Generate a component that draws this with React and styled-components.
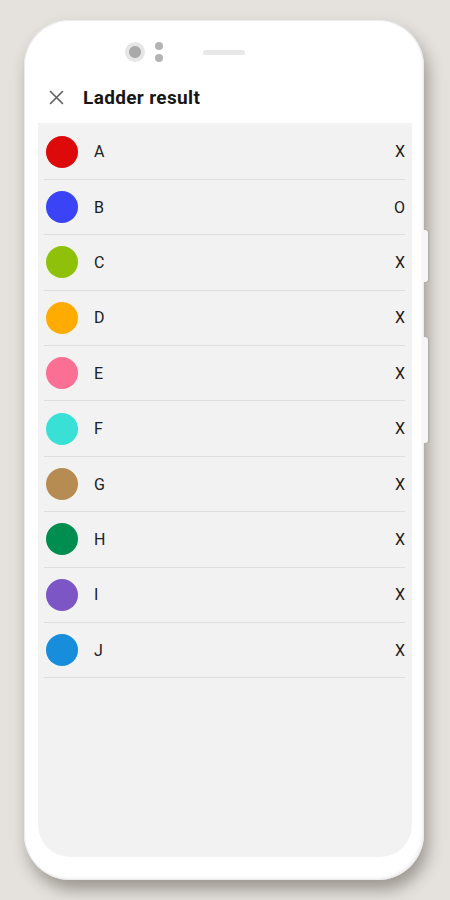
import React from "react";
import styled, { createGlobalStyle } from "styled-components";

const GlobalStyle = createGlobalStyle`
  html, body {
    margin: 0;
    padding: 0;
    background: #e5e2de;
    font-family: Roboto, "Liberation Sans", sans-serif;
  }
`;

const results = [
  { name: "A", color: "#dc0a0b", mark: "X" },
  { name: "B", color: "#3a43f5", mark: "O" },
  { name: "C", color: "#8fc10b", mark: "X" },
  { name: "D", color: "#ffab00", mark: "X" },
  { name: "E", color: "#fb6f95", mark: "X" },
  { name: "F", color: "#38e0d5", mark: "X" },
  { name: "G", color: "#b68c52", mark: "X" },
  { name: "H", color: "#008d50", mark: "X" },
  { name: "I", color: "#7b56c4", mark: "X" },
  { name: "J", color: "#188ddb", mark: "X" },
];

const App = () => {
  return (
    <>
      <GlobalStyle />
      <Stage>
        <Phone>
          <SideButton $top={210} $height={52} />
          <SideButton $top={317} $height={106} />
          <TopBar>
            <Camera />
            <Sensors>
              <Dot />
              <Dot />
            </Sensors>
            <Speaker />
          </TopBar>
          <Screen>
            <Header>
              <CloseButton>
                <svg width="15" height="15" viewBox="0 0 15 15">
                  <path
                    d="M1.5 1.5 L13.5 13.5 M13.5 1.5 L1.5 13.5"
                    stroke="#5f5f5f"
                    strokeWidth="1.6"
                    strokeLinecap="round"
                  />
                </svg>
              </CloseButton>
              <Title>Ladder result</Title>
            </Header>
            <List>
              {results.map((item) => (
                <Row key={item.name}>
                  <Swatch $color={item.color} />
                  <Name>{item.name}</Name>
                  <Mark>{item.mark}</Mark>
                </Row>
              ))}
            </List>
          </Screen>
        </Phone>
      </Stage>
    </>
  );
};

export default App;

const Stage = styled.div`
  width: 450px;
  height: 900px;
  padding: 20px 0 0 24px;
  box-sizing: border-box;
  overflow: hidden;
`;

const Phone = styled.div`
  position: relative;
  width: 400px;
  height: 860px;
  box-sizing: border-box;
  padding: 0 12px 23px 14px;
  display: flex;
  flex-direction: column;
  background: #ffffff;
  border-radius: 46px;
  box-shadow: inset 0 0 0 1px #ececec, inset -2px -2px 3px rgba(0, 0, 0, 0.06),
    4px 10px 16px rgba(50, 40, 30, 0.4);
`;

const SideButton = styled.div`
  position: absolute;
  right: -4px;
  top: ${(p) => p.$top}px;
  width: 5px;
  height: ${(p) => p.$height}px;
  background: #f6f6f6;
  border-radius: 0 3px 3px 0;
  box-shadow: 1px 0 2px rgba(0, 0, 0, 0.1);
`;

const TopBar = styled.div`
  height: 50px;
  flex-shrink: 0;
  display: flex;
  align-items: center;
  padding: 14px 0 0 87px;
  box-sizing: border-box;
`;

const Camera = styled.div`
  width: 20px;
  height: 20px;
  border-radius: 50%;
  background: radial-gradient(circle, #a9a9a9 0 5.5px, #e6e6e6 6.5px);
`;

const Sensors = styled.div`
  display: flex;
  flex-direction: column;
  gap: 4px;
  margin-left: 10px;
`;

const Dot = styled.div`
  width: 8px;
  height: 8px;
  border-radius: 50%;
  background: #b4b4b4;
`;

const Speaker = styled.div`
  width: 42px;
  height: 5px;
  margin-left: 40px;
  border-radius: 3px;
  background: #e8e8e8;
`;

const Screen = styled.div`
  flex: 1;
  display: flex;
  flex-direction: column;
  border-radius: 0 0 32px 32px;
  overflow: hidden;
`;

const Header = styled.div`
  height: 53px;
  flex-shrink: 0;
  display: flex;
  align-items: center;
  padding: 2px 0 0 11px;
  box-sizing: border-box;
  background: #ffffff;
`;

const CloseButton = styled.div`
  width: 15px;
  height: 15px;
  display: flex;
`;

const Title = styled.div`
  margin-left: 19px;
  font-size: 19px;
  font-weight: 700;
  letter-spacing: 0.35px;
  color: #161616;
`;

const List = styled.div`
  flex: 1;
  background: #f2f2f2;
  padding: 1.5px 7px 0 6px;
`;

const Row = styled.div`
  height: 54.4px;
  display: flex;
  align-items: center;
  padding-left: 2px;
  border-bottom: 1px solid #dedede;
`;

const Swatch = styled.div`
  width: 32px;
  height: 32px;
  border-radius: 50%;
  background: ${(p) => p.$color};
`;

const Name = styled.div`
  flex: 1;
  margin-left: 16px;
  font-size: 16px;
  color: #202020;
`;

const Mark = styled.div`
  font-size: 16px;
  color: #202020;
`;
